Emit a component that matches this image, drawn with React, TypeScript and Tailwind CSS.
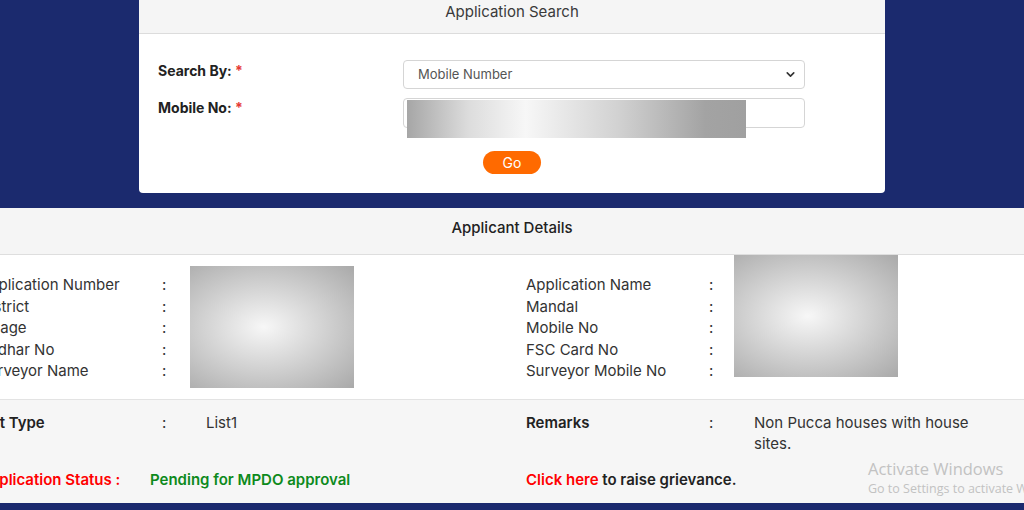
import { ChevronDown } from 'lucide-react';

const leftRows = ['Application Number', 'District', 'Village', 'Aadhar No', 'Surveyor Name'];
const rightRows = ['Application Name', 'Mandal', 'Mobile No', 'FSC Card No', 'Surveyor Mobile No'];

function DetailColumn({ rows, blurClass }: { rows: string[]; blurClass: string }) {
  return (
    <div className="relative w-[547px] shrink-0 flex flex-col">
      {rows.map((r) => (
        <div key={r} className="flex leading-[21.6px]">
          <span className="w-[183px] shrink-0 whitespace-nowrap">{r}</span>
          <span className="w-[44px] shrink-0">:</span>
          <span />
        </div>
      ))}
      <div className={`absolute w-[164px] h-[122px] ${blurClass} bg-[radial-gradient(ellipse_at_45%_50%,#f7f7f7_0%,#d4d4d4_45%,#a9a9a9_100%)]`} />
    </div>
  );
}

export default function App() {
  return (
    <div className="relative w-[1024px] h-[510px] overflow-hidden bg-[#1b2a6e] font-['Inter',sans-serif] text-[#333]">
      {/* Application Search card */}
      <div className="mx-auto w-[746px] bg-white rounded-b-[4px]">
        <div className="h-[34px] bg-[#f5f5f5] border-b border-[#dcdcdc] pt-[1px] text-center text-[15px] leading-[22px] text-[#3a3a3a]">
          Application Search
        </div>
        <div className="pt-[26px] pb-[19px]">
          <div className="flex items-start">
            <div className="w-[264px] pl-[19px] pt-[1px] text-[14px] leading-[20px] font-bold text-[#222]">
              Search By: <span className="text-[#e53935]">*</span>
            </div>
            <div className="w-[402px] h-[29px] border border-[#d5d5d5] rounded-[4px] flex items-center justify-between pl-[14px] pr-[7px] text-[13px] text-[#555]">
              <span>Mobile Number</span>
              <ChevronDown size={13} strokeWidth={3} className="text-[#333]" />
            </div>
          </div>
          <div className="flex items-start mt-[9px]">
            <div className="w-[264px] pl-[19px] text-[14px] leading-[20px] font-bold text-[#222]">
              Mobile No: <span className="text-[#e53935]">*</span>
            </div>
            <div className="relative w-[402px] h-[30px] border border-[#d5d5d5] rounded-[4px]">
              <div className="absolute left-[3px] top-[1px] w-[339px] h-[38px] bg-[linear-gradient(90deg,#a6a6a6_0%,#dcdcdc_18%,#f7f7f7_35%,#d2d2d2_62%,#a3a3a3_88%,#a0a0a0_100%)]" />
            </div>
          </div>
          <div className="flex justify-center mt-[23px]">
            <button className="w-[58px] h-[23px] rounded-full bg-[#ff6a00] text-white text-[14px] leading-[23px]">Go</button>
          </div>
        </div>
      </div>

      {/* Applicant Details */}
      <div className="mt-[15px] bg-white">
        <div className="h-[47px] bg-[#f5f5f5] border-b border-[#dedede] pt-[10px] text-center text-[15px] leading-[20px] font-medium text-[#222]">
          Applicant Details
        </div>
        <div className="flex ml-[-21px] pt-[19px] pb-[17px] text-[15px] text-[#333]">
          <DetailColumn rows={leftRows} blurClass="left-[211px] top-[-8px]" />
          <DetailColumn rows={rightRows} blurClass="left-[208px] top-[-19px]" />
        </div>
        <div className="border-t border-[#e3e3e3] bg-[#f6f6f6] pt-[12px] pb-[13px] text-[15px]">
          <div className="flex ml-[-21px] leading-[21px]">
            <div className="w-[547px] shrink-0 flex">
              <span className="w-[183px] shrink-0 font-semibold text-[#222] whitespace-nowrap">List Type</span>
              <span className="w-[44px] shrink-0">:</span>
              <span>List1</span>
            </div>
            <div className="w-[547px] shrink-0 flex">
              <span className="w-[183px] shrink-0 font-semibold text-[#222]">Remarks</span>
              <span className="w-[45px] shrink-0">:</span>
              <span className="w-[236px]">Non Pucca houses with house sites.</span>
            </div>
          </div>
          <div className="flex ml-[-21px] mt-[15px] leading-[21px] font-semibold">
            <div className="w-[547px] shrink-0 flex">
              <span className="w-[171px] shrink-0 text-[#ff0000] whitespace-nowrap">Application Status :</span>
              <span className="text-[#0d8a1c]">Pending for MPDO approval</span>
            </div>
            <div className="w-[547px] shrink-0">
              <span className="text-[#ff0000]">Click here</span> <span className="text-[#222]">to raise grievance.</span>
            </div>
          </div>
        </div>
      </div>

      {/* Windows watermark */}
      <div className="absolute left-[868px] top-[458px] whitespace-nowrap font-['Open_Sans',sans-serif] text-[#c2c2c2]">
        <div className="text-[16.5px] leading-[22px]">Activate Windows</div>
        <div className="text-[12.5px] leading-[18px]">Go to Settings to activate Windows.</div>
      </div>
    </div>
  );
}
